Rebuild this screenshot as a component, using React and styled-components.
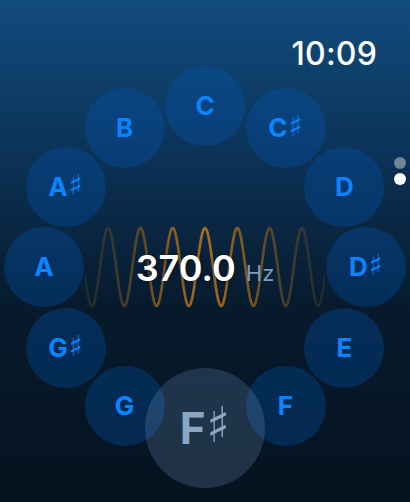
import React from "react";
import styled, { createGlobalStyle } from "styled-components";

const GlobalStyle = createGlobalStyle`
  html, body { margin: 0; padding: 0; background: #061320; }
  body { font-family: Inter, "Noto Sans", sans-serif; }
`;

const NOTES = ["C", "C#", "D", "D#", "E", "F", "F#", "G", "G#", "A", "A#", "B"];
const SELECTED = "F#";
const RING_RADIUS = 161;
const CENTER_X = 205;
const CENTER_Y = 201;

const Screen = styled.div`
  position: relative;
  width: 410px;
  height: 502px;
  overflow: hidden;
  display: flex;
  flex-direction: column;
  background: linear-gradient(180deg, #114c7e 0%, #0c3358 30%, #071a2c 62%, #061320 100%);
`;

const Header = styled.div`
  height: 66px;
  box-sizing: border-box;
  padding: 35px 33px 0 0;
  display: flex;
  justify-content: flex-end;
  align-items: flex-start;
`;

const Time = styled.div`
  color: #fff;
  font-size: 32px;
  font-weight: 500;
  line-height: 1.2;
  letter-spacing: 0.2px;
`;

const Dial = styled.div`
  position: relative;
  flex: 1;
`;

const Note = styled.div.attrs((p) => ({
  style: { left: `${p.$x}px`, top: `${p.$y}px` },
}))`
  position: absolute;
  width: ${(p) => (p.$active ? 120 : 80)}px;
  height: ${(p) => (p.$active ? 120 : 80)}px;
  margin: ${(p) => (p.$active ? -60 : -40)}px 0 0 ${(p) => (p.$active ? -60 : -40)}px;
  border-radius: 50%;
  display: flex;
  align-items: center;
  justify-content: center;
  background: ${(p) => (p.$active ? "rgba(150, 190, 240, 0.18)" : "rgba(0, 90, 190, 0.3)")};
  color: ${(p) => (p.$active ? "#8ba7c6" : "#0a84ff")};
  font-size: ${(p) => (p.$active ? 44 : 26)}px;
  font-weight: 700;
  z-index: ${(p) => (p.$active ? 2 : 1)};
`;

const Letter = styled.span`
  line-height: 1;
`;

const Sharp = styled.span`
  font-family: "DejaVu Sans", sans-serif;
  font-weight: 400;
  font-size: 1.12em;
  line-height: 1;
  margin-left: 1px;
  transform: translateY(-0.04em);
`;

const Readout = styled.div`
  position: absolute;
  left: ${CENTER_X}px;
  top: ${CENTER_Y}px;
  transform: translate(-50%, -50%);
  display: grid;
  place-items: center;
`;

const Wave = styled.svg`
  grid-area: 1 / 1;
  display: block;
`;

const Frequency = styled.div`
  grid-area: 1 / 1;
  display: flex;
  align-items: baseline;
  gap: 10px;
  margin-top: 2px;
`;

const Value = styled.span`
  color: #fff;
  font-size: 36px;
  font-weight: 600;
  text-shadow: 0 0 6px rgba(0, 0, 0, 0.55);
`;

const Unit = styled.span`
  color: #7d9cbc;
  font-size: 22px;
  font-weight: 400;
`;

const PageDots = styled.div`
  position: absolute;
  right: 4px;
  top: 157px;
  display: flex;
  flex-direction: column;
  gap: 4px;
`;

const Dot = styled.span`
  width: 12px;
  height: 12px;
  border-radius: 50%;
  background: ${(p) => (p.$current ? "#ffffff" : "#6f8296")};
`;

function wavePath() {
  const width = 240;
  const mid = 42;
  const amp = 39;
  const period = 32.3;
  const pts = [];
  for (let x = 0; x <= width; x += 1) {
    const y = mid - amp * Math.cos(((x - width / 2) / period) * Math.PI * 2);
    pts.push(`${x === 0 ? "M" : "L"}${x},${y.toFixed(2)}`);
  }
  return pts.join(" ");
}

const NoteLabel = ({ name }) => {
  const sharp = name.includes("#");
  return (
    <>
      <Letter>{name[0]}</Letter>
      {sharp && <Sharp>♯</Sharp>}
    </>
  );
};

export default function App() {
  return (
    <>
      <GlobalStyle />
      <Screen>
        <Header>
          <Time>10:09</Time>
        </Header>
        <Dial>
          <Readout>
            <Wave width="240" height="84" viewBox="0 0 240 84">
              <defs>
                <linearGradient id="wave" x1="0" x2="1" y1="0" y2="0">
                  <stop offset="0" stopColor="#3a3a30" stopOpacity="0.45" />
                  <stop offset="0.3" stopColor="#76531f" />
                  <stop offset="0.5" stopColor="#a86d1e" />
                  <stop offset="0.7" stopColor="#76531f" />
                  <stop offset="1" stopColor="#3a3a30" stopOpacity="0.45" />
                </linearGradient>
              </defs>
              <path d={wavePath()} fill="none" stroke="url(#wave)" strokeWidth="2.6" />
            </Wave>
            <Frequency>
              <Value>370.0</Value>
              <Unit>Hz</Unit>
            </Frequency>
          </Readout>
          {NOTES.map((name, i) => {
            const a = (i * Math.PI) / 6;
            const x = CENTER_X + RING_RADIUS * Math.sin(a);
            const y = CENTER_Y - RING_RADIUS * Math.cos(a);
            return (
              <Note key={name} $x={x} $y={y} $active={name === SELECTED}>
                <NoteLabel name={name} />
              </Note>
            );
          })}
        </Dial>
        <PageDots>
          <Dot />
          <Dot $current />
        </PageDots>
      </Screen>
    </>
  );
}
